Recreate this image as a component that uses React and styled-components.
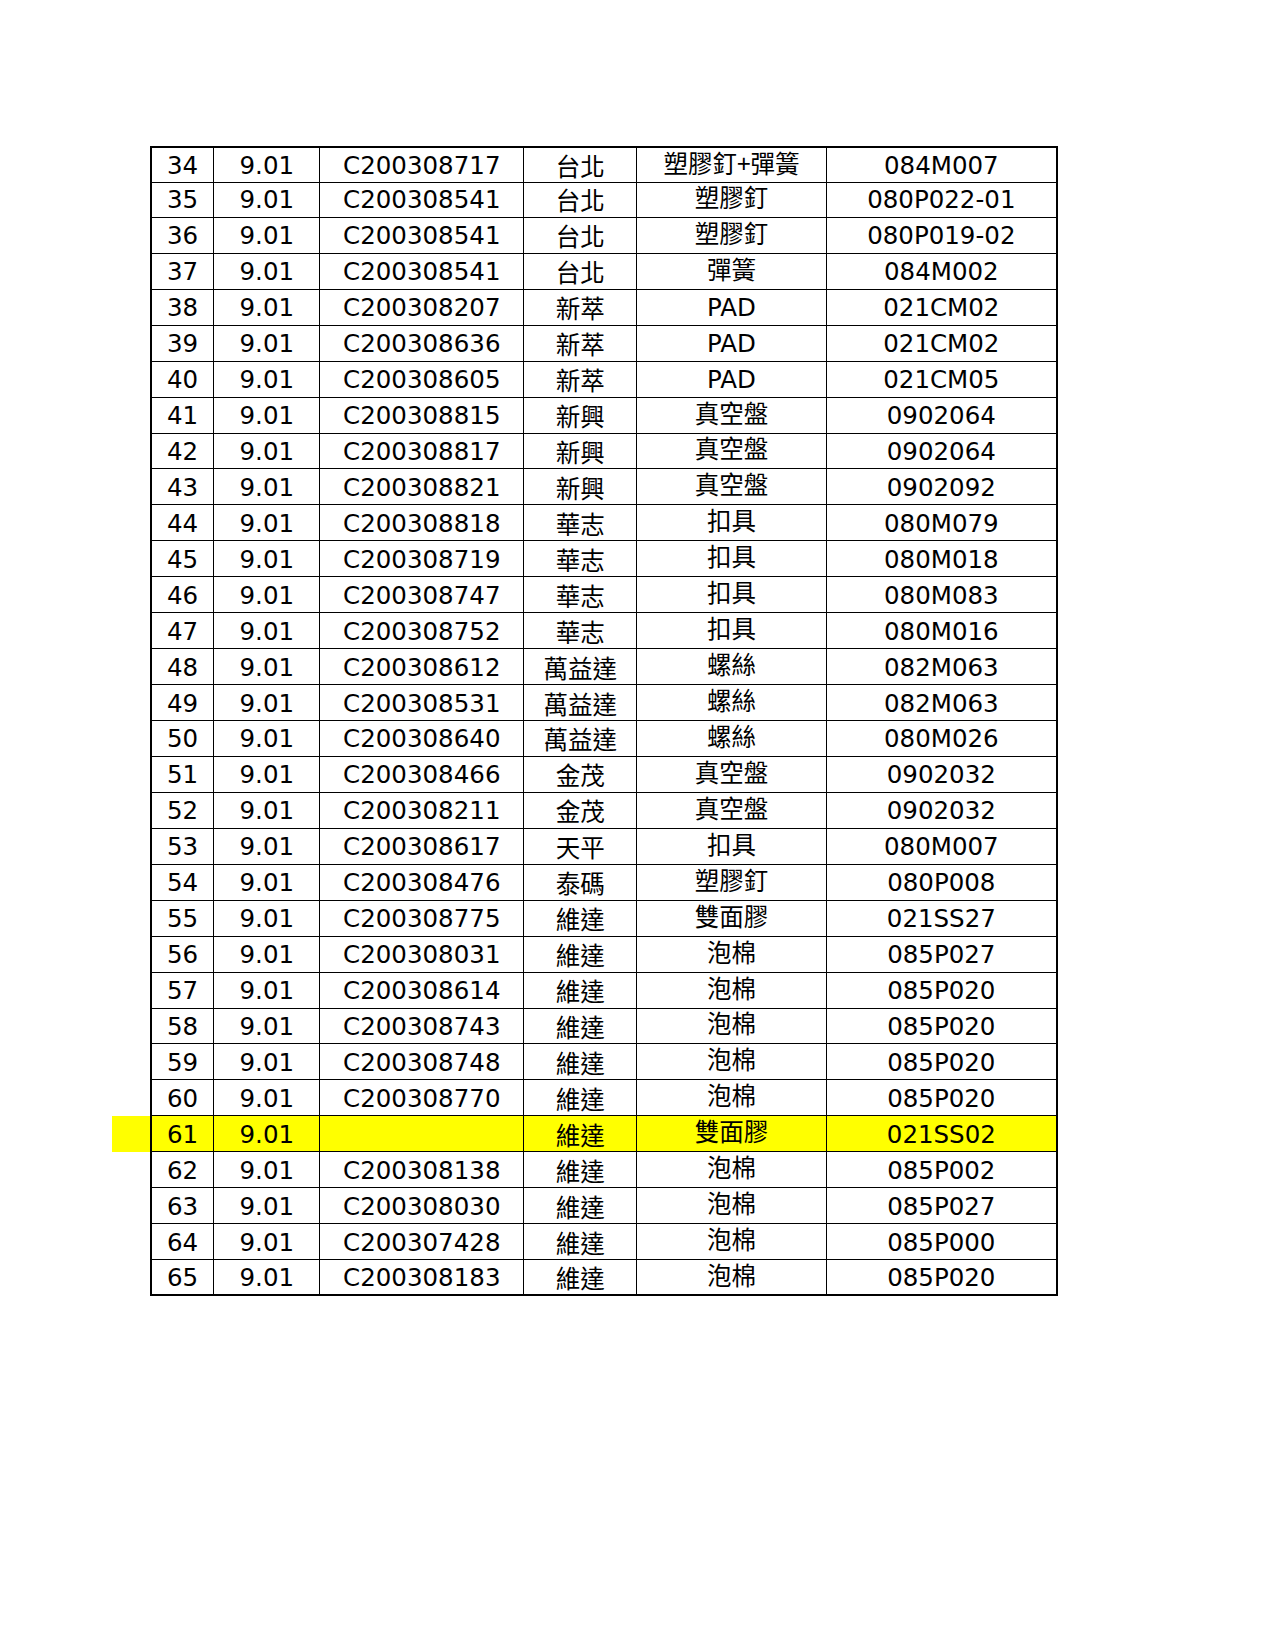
import React from "react";
import styled, { createGlobalStyle } from "styled-components";

const GlobalStyle = createGlobalStyle`
  html, body {
    margin: 0;
    padding: 0;
    background: #ffffff;
  }
  body {
    font-family: "DejaVu Sans", "Noto Sans CJK TC", sans-serif;
    color: #000000;
  }
`;

const Page = styled.div`
  width: 1275px;
  min-height: 1650px;
  padding-top: 146px;
  padding-left: 112px;
  box-sizing: border-box;
`;

const Sheet = styled.div`
  display: flex;
  flex-direction: column;
  width: 946px;
`;

const Row = styled.div`
  display: grid;
  grid-template-columns: 38.7px 63.6px 106px 204px 113px 189.4px 231.3px;
  height: 35.94px;
  background: ${props => (props.highlight ? "#ffff00" : "transparent")};
`;

const Lead = styled.div`
  height: 100%;
`;

const Cell = styled.div`
  box-sizing: border-box;
  height: 100%;
  display: flex;
  align-items: center;
  justify-content: center;
  font-family: "DejaVu Sans", "Noto Sans CJK TC", sans-serif;
  font-size: 24.5px;
  line-height: 1;
  white-space: nowrap;
  padding-top: 2.5px;
  border-bottom: ${props => (props.last ? "2px" : "1.5px")} solid #000;
  border-top: ${props => (props.first ? "2px solid #000" : "none")};
  border-right: ${props => (props.end ? "2px" : "1.5px")} solid #000;
  border-left: ${props => (props.start ? "2px solid #000" : "none")};
  margin-left: ${props => (props.start ? "-1px" : "0")};
`;

/* CJK runs sit on their own baseline in the sheet: supplier names low, item names high */
const Han = styled.span`
  display: inline-block;
  font-family: "Noto Sans CJK TC", "DejaVu Sans", sans-serif;
  padding-top: 0;
  padding-bottom: ${props => (props.low ? "0" : "7px")};
`;

const rows = [
  [34, "C200308717", "台北", "塑膠釘+彈簧", "084M007"],
  [35, "C200308541", "台北", "塑膠釘", "080P022-01"],
  [36, "C200308541", "台北", "塑膠釘", "080P019-02"],
  [37, "C200308541", "台北", "彈簧", "084M002"],
  [38, "C200308207", "新萃", "PAD", "021CM02"],
  [39, "C200308636", "新萃", "PAD", "021CM02"],
  [40, "C200308605", "新萃", "PAD", "021CM05"],
  [41, "C200308815", "新興", "真空盤", "0902064"],
  [42, "C200308817", "新興", "真空盤", "0902064"],
  [43, "C200308821", "新興", "真空盤", "0902092"],
  [44, "C200308818", "華志", "扣具", "080M079"],
  [45, "C200308719", "華志", "扣具", "080M018"],
  [46, "C200308747", "華志", "扣具", "080M083"],
  [47, "C200308752", "華志", "扣具", "080M016"],
  [48, "C200308612", "萬益達", "螺絲", "082M063"],
  [49, "C200308531", "萬益達", "螺絲", "082M063"],
  [50, "C200308640", "萬益達", "螺絲", "080M026"],
  [51, "C200308466", "金茂", "真空盤", "0902032"],
  [52, "C200308211", "金茂", "真空盤", "0902032"],
  [53, "C200308617", "天平", "扣具", "080M007"],
  [54, "C200308476", "泰碼", "塑膠釘", "080P008"],
  [55, "C200308775", "維達", "雙面膠", "021SS27"],
  [56, "C200308031", "維達", "泡棉", "085P027"],
  [57, "C200308614", "維達", "泡棉", "085P020"],
  [58, "C200308743", "維達", "泡棉", "085P020"],
  [59, "C200308748", "維達", "泡棉", "085P020"],
  [60, "C200308770", "維達", "泡棉", "085P020"],
  [61, "", "維達", "雙面膠", "021SS02"],
  [62, "C200308138", "維達", "泡棉", "085P002"],
  [63, "C200308030", "維達", "泡棉", "085P027"],
  [64, "C200307428", "維達", "泡棉", "085P000"],
  [65, "C200308183", "維達", "泡棉", "085P020"]
];

const hasHan = s => /[\u3400-\u9fff]/.test(s);

export default function App() {
  return (
    <Page>
      <GlobalStyle />
      <Sheet>
        {rows.map((r, i) => {
          const first = i === 0;
          const last = i === rows.length - 1;
          const cells = [
            r[0],
            "9.01",
            r[1],
            <Han low>{r[2]}</Han>,
            hasHan(r[3]) ? <Han>{r[3]}</Han> : r[3],
            r[4]
          ];
          return (
            <Row key={r[0]} highlight={r[0] === 61}>
              <Lead />
              {cells.map((c, j) => (
                <Cell
                  key={j}
                  first={first}
                  last={last}
                  start={j === 0}
                  end={j === cells.length - 1}
                >
                  {c}
                </Cell>
              ))}
            </Row>
          );
        })}
      </Sheet>
    </Page>
  );
}
